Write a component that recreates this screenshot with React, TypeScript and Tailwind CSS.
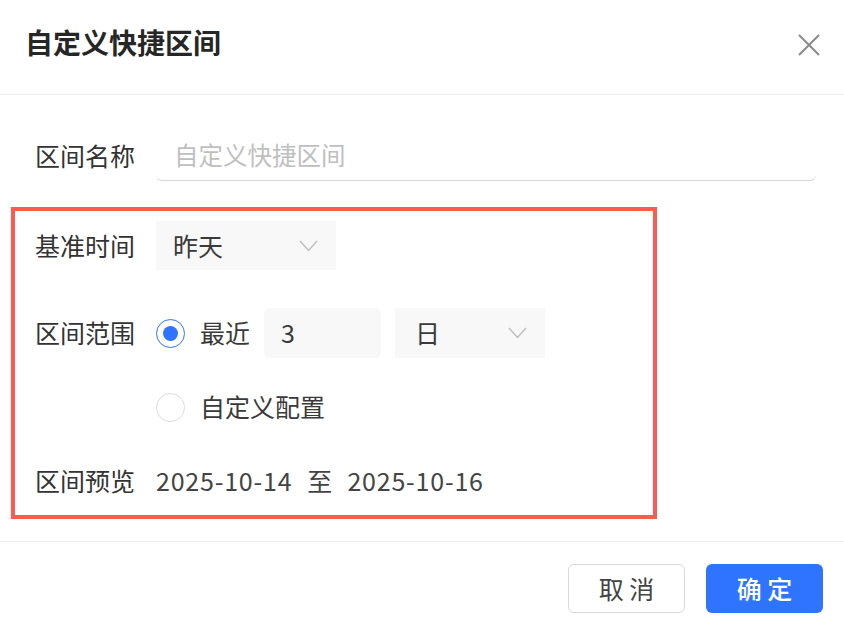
import React from "react";

const font = { fontFamily: '"Noto Sans CJK SC", "Noto Sans", sans-serif' };

const Chevron = () => (
  <svg width="19" height="12" viewBox="0 0 19 12" fill="none">
    <polyline points="1,1 9.5,10.5 18,1" stroke="#bdbdbd" strokeWidth="1.4" />
  </svg>
);

const Radio = ({ checked }: { checked?: boolean }) =>
  checked ? (
    <span className="flex h-[29px] w-[29px] items-center justify-center rounded-full border-[1.5px] border-[#2f74ff]">
      <span className="h-[15px] w-[15px] rounded-full bg-[#2f74ff]" />
    </span>
  ) : (
    <span className="h-[29px] w-[29px] rounded-full border-[1.5px] border-[#dcdcdc]" />
  );

export default function App() {
  return (
    <div className="h-[624px] w-[844px] bg-white text-[25px] text-[#333]" style={font}>
      {/* header */}
      <div className="flex h-[95px] items-start justify-between border-b border-[#eeeeee] pl-[25px] pr-[23px] pt-[24px]">
        <h1 className="text-[28px] font-bold leading-[36px] text-[#262626]">自定义快捷区间</h1>
        <button className="mt-[9px]">
          <svg width="24" height="24" viewBox="0 0 24 24" fill="none">
            <path d="M2 2 L22 22 M22 2 L2 22" stroke="#8a8a8a" strokeWidth="2" />
          </svg>
        </button>
      </div>

      {/* body */}
      <div className="pt-[35px]">
        <div className="flex h-[51px] items-center pl-[35px] pr-[28px]">
          <span className="w-[121px] shrink-0">区间名称</span>
          <div className="flex h-full flex-1 items-center rounded-b-[6px] border-b border-[#d6d6d6] pl-[18px] text-[24.5px] text-[#bfbfbf]">
            自定义快捷区间
          </div>
        </div>

        <div className="ml-[11px] mt-[26px] w-[646px] border-4 border-[#ff5a4f] pb-[9px] pl-[20px] pt-[10px]">
          <div className="flex h-[49px] items-center">
            <span className="w-[121px] shrink-0">基准时间</span>
            <div className="flex h-full w-[180px] items-center justify-between bg-[#f8f8f8] pl-[17px] pr-[18px]">
              <span className="text-[#3a3a3a]">昨天</span>
              <Chevron />
            </div>
          </div>

          <div className="mt-[38px] flex h-[50px] items-center">
            <span className="w-[121px] shrink-0">区间范围</span>
            <Radio checked />
            <span className="ml-[15px] text-[#3a3a3a]">最近</span>
            <div className="ml-[14px] flex h-full w-[117px] items-center rounded-[6px] bg-[#f8f8f8] pl-[17px] text-[#3a3a3a]">
              3
            </div>
            <div className="ml-[14px] flex h-full w-[150px] items-center justify-between bg-[#f8f8f8] pl-[20px] pr-[18px]">
              <span className="text-[#3a3a3a]">日</span>
              <Chevron />
            </div>
          </div>

          <div className="mt-[24px] flex h-[50px] items-center pl-[121px]">
            <Radio />
            <span className="ml-[15px] text-[#3a3a3a]">自定义配置</span>
          </div>

          <div className="mt-[24px] flex h-[50px] items-center">
            <span className="w-[121px] shrink-0">区间预览</span>
            <span className="tracking-[0.8px] text-[#444]">2025-10-14</span>
            <span className="mx-[15px] text-[#444]">至</span>
            <span className="tracking-[0.8px] text-[#444]">2025-10-16</span>
          </div>
        </div>
      </div>

      {/* footer */}
      <div className="mt-[22px] flex justify-end gap-[21px] border-t border-[#eeeeee] pr-[21px] pt-[22px]">
        <button className="flex h-[49px] w-[117px] items-center justify-center rounded-[6px] border border-[#d9d9d9] bg-white text-[#444]">
          取&nbsp;消
        </button>
        <button className="flex h-[49px] w-[117px] items-center justify-center rounded-[6px] bg-[#2f74ff] font-medium text-white">
          确&nbsp;定
        </button>
      </div>
    </div>
  );
}
